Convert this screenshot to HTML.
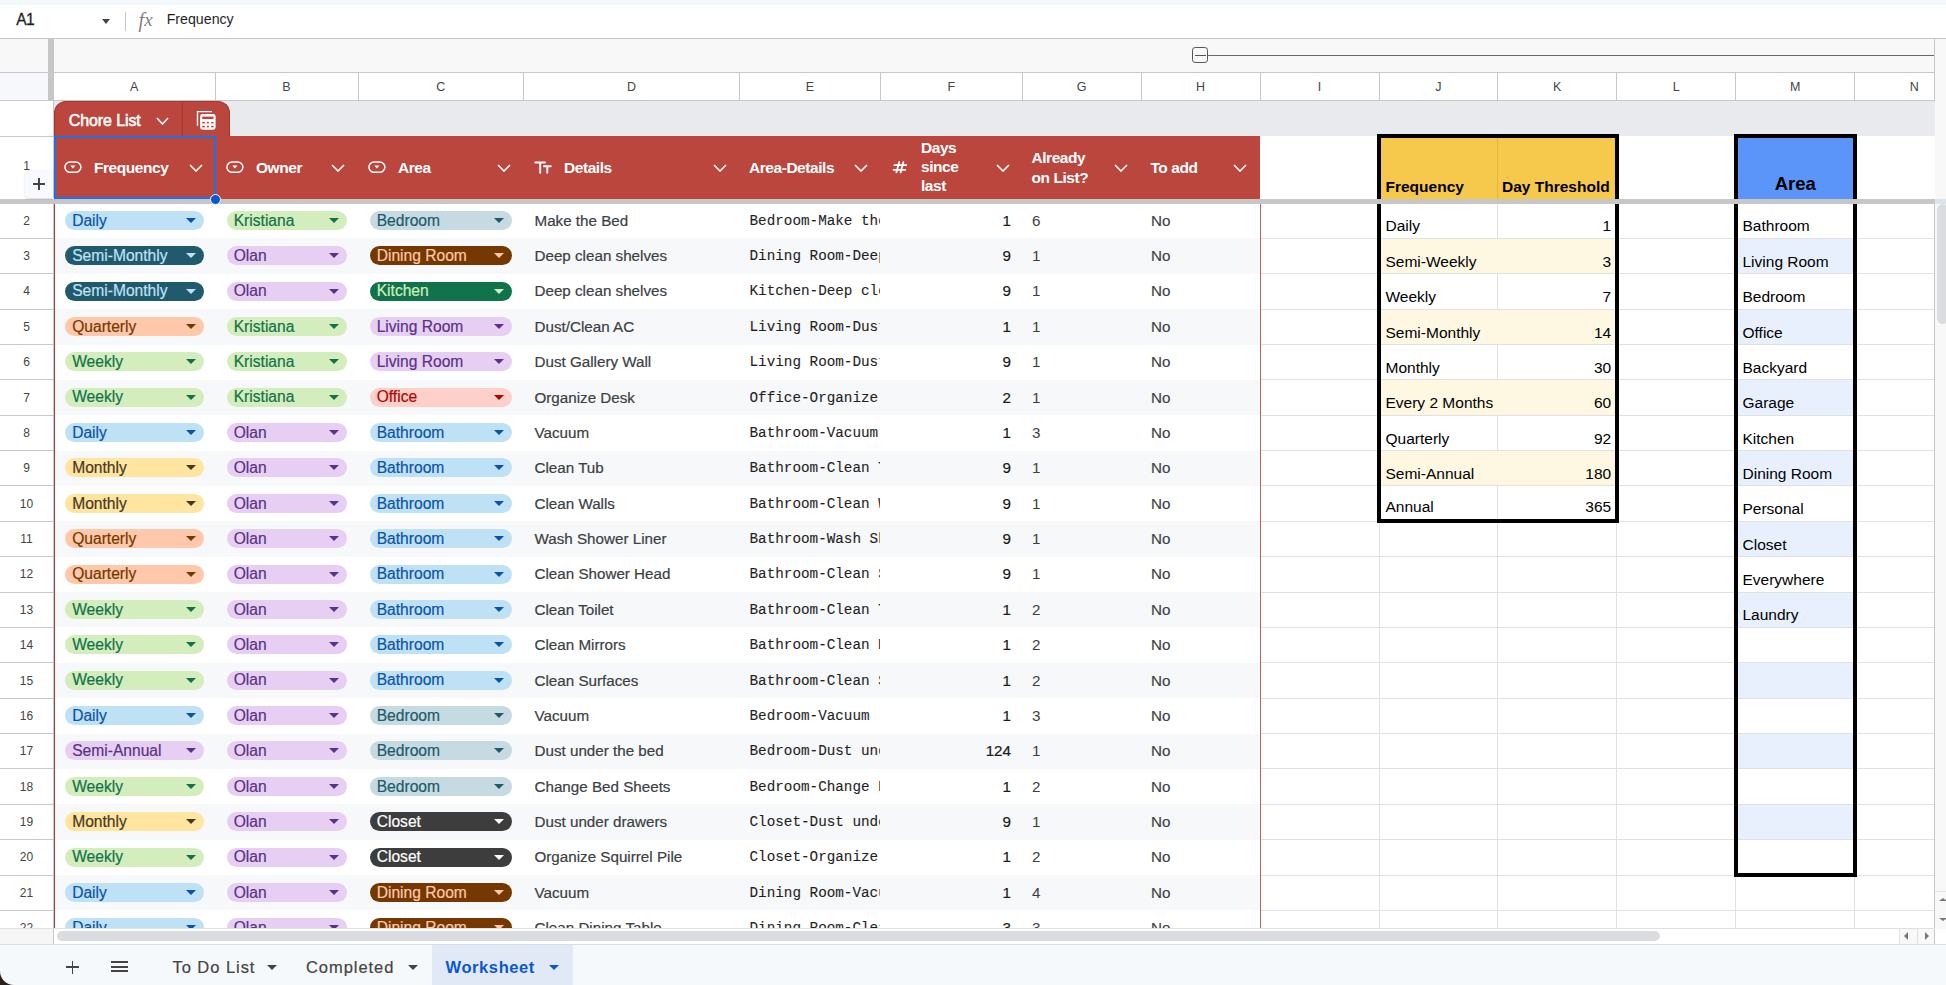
<!DOCTYPE html><html><head><meta charset="utf-8"><style>
html,body{margin:0;padding:0;width:1946px;height:985px;overflow:hidden;background:#fff;font-family:"Liberation Sans", sans-serif;}
#r{position:relative;width:1946px;height:985px;overflow:hidden;}
.chip{position:absolute;height:19px;border-radius:10px;font-size:15.6px;line-height:19px;}
.chip span{position:absolute;left:7.2px;top:-0.3px;-webkit-text-stroke:0.2px currentColor;}
.chip i{position:absolute;right:8px;top:7px;width:0;height:0;border-left:5px solid transparent;border-right:5px solid transparent;border-top:5px solid currentColor;}
.t{position:absolute;white-space:nowrap;}
</style></head><body><div id="r">
<div style="position:absolute;left:0.00px;top:0.00px;width:1946.00px;height:4.50px;background:#f4f8fc;"></div>
<div style="position:absolute;left:0.00px;top:4.50px;width:1946.00px;height:33.50px;background:#fff;"></div>
<div style="position:absolute;left:0.00px;top:38.00px;width:1946.00px;height:1.00px;background:#c7c7c7;"></div>
<div style="position:absolute;left:16.30px;top:9.80px;white-space:nowrap;font-size:15.6px;line-height:20px;color:#1f1f1f;letter-spacing:-0.7px;-webkit-text-stroke:0.3px #1f1f1f;">A1</div>
<div style="position:absolute;left:101.5px;top:18.5px;width:0;height:0;border-left:4.5px solid transparent;border-right:4.5px solid transparent;border-top:5px solid #444;"></div>
<div style="position:absolute;left:125.00px;top:12.00px;width:1.00px;height:19.00px;background:#c7c7c7;"></div>
<div style="position:absolute;left:138.5px;top:9.5px;font-family:'Liberation Serif',serif;font-style:italic;font-size:20px;line-height:20px;color:#808080;">f</div>
<div style="position:absolute;left:144.3px;top:9.5px;font-family:'Liberation Serif',serif;font-style:italic;font-size:19px;line-height:20px;color:#808080;">x</div>
<div style="position:absolute;left:166.70px;top:9.20px;white-space:nowrap;font-size:14.2px;line-height:20px;color:#1f1f1f;">Frequency</div>
<div style="position:absolute;left:0.00px;top:39.00px;width:1946.00px;height:33.00px;background:#f8f8f8;"></div>
<div style="position:absolute;left:0.00px;top:72.00px;width:1946.00px;height:1.00px;background:#c7c7c7;"></div>
<div style="position:absolute;left:1192px;top:47.2px;width:13.8px;height:13.8px;border:1.5px solid #555;border-radius:3.2px;background:#f8f8f8;"></div>
<div style="position:absolute;left:1195.20px;top:54.70px;width:10.40px;height:1.50px;background:#555;"></div>
<div style="position:absolute;left:1207.50px;top:54.80px;width:727.00px;height:1.30px;background:#6a6a6a;"></div>
<div style="position:absolute;left:53.50px;top:73.00px;width:1881.00px;height:27.00px;background:#fff;"></div>
<div style="position:absolute;left:0.00px;top:73.00px;width:48.00px;height:27.00px;background:#f6f8fb;"></div>
<div style="position:absolute;left:0.00px;top:100.00px;width:1946.00px;height:1.00px;background:#c7c7c7;"></div>
<div style="position:absolute;left:48.00px;top:39.00px;width:5.50px;height:61.00px;background:#c7c7c7;"></div>
<div style="position:absolute;left:53.50px;top:77.70px;width:161.50px;white-space:nowrap;font-size:12.5px;line-height:18px;color:#444;text-align:center;">A</div>
<div style="position:absolute;left:214.50px;top:73.00px;width:1.00px;height:27.00px;background:#c7c7c7;"></div>
<div style="position:absolute;left:215.00px;top:77.70px;width:143.00px;white-space:nowrap;font-size:12.5px;line-height:18px;color:#444;text-align:center;">B</div>
<div style="position:absolute;left:357.50px;top:73.00px;width:1.00px;height:27.00px;background:#c7c7c7;"></div>
<div style="position:absolute;left:358.00px;top:77.70px;width:165.50px;white-space:nowrap;font-size:12.5px;line-height:18px;color:#444;text-align:center;">C</div>
<div style="position:absolute;left:523.00px;top:73.00px;width:1.00px;height:27.00px;background:#c7c7c7;"></div>
<div style="position:absolute;left:523.50px;top:77.70px;width:215.80px;white-space:nowrap;font-size:12.5px;line-height:18px;color:#444;text-align:center;">D</div>
<div style="position:absolute;left:738.80px;top:73.00px;width:1.00px;height:27.00px;background:#c7c7c7;"></div>
<div style="position:absolute;left:739.30px;top:77.70px;width:141.20px;white-space:nowrap;font-size:12.5px;line-height:18px;color:#444;text-align:center;">E</div>
<div style="position:absolute;left:880.00px;top:73.00px;width:1.00px;height:27.00px;background:#c7c7c7;"></div>
<div style="position:absolute;left:880.50px;top:77.70px;width:141.50px;white-space:nowrap;font-size:12.5px;line-height:18px;color:#444;text-align:center;">F</div>
<div style="position:absolute;left:1021.50px;top:73.00px;width:1.00px;height:27.00px;background:#c7c7c7;"></div>
<div style="position:absolute;left:1022.00px;top:77.70px;width:119.00px;white-space:nowrap;font-size:12.5px;line-height:18px;color:#444;text-align:center;">G</div>
<div style="position:absolute;left:1140.50px;top:73.00px;width:1.00px;height:27.00px;background:#c7c7c7;"></div>
<div style="position:absolute;left:1141.00px;top:77.70px;width:119.00px;white-space:nowrap;font-size:12.5px;line-height:18px;color:#444;text-align:center;">H</div>
<div style="position:absolute;left:1259.50px;top:73.00px;width:1.00px;height:27.00px;background:#c7c7c7;"></div>
<div style="position:absolute;left:1260.00px;top:77.70px;width:119.00px;white-space:nowrap;font-size:12.5px;line-height:18px;color:#444;text-align:center;">I</div>
<div style="position:absolute;left:1378.50px;top:73.00px;width:1.00px;height:27.00px;background:#c7c7c7;"></div>
<div style="position:absolute;left:1379.00px;top:77.70px;width:118.70px;white-space:nowrap;font-size:12.5px;line-height:18px;color:#444;text-align:center;">J</div>
<div style="position:absolute;left:1497.20px;top:73.00px;width:1.00px;height:27.00px;background:#c7c7c7;"></div>
<div style="position:absolute;left:1497.70px;top:77.70px;width:119.10px;white-space:nowrap;font-size:12.5px;line-height:18px;color:#444;text-align:center;">K</div>
<div style="position:absolute;left:1616.30px;top:73.00px;width:1.00px;height:27.00px;background:#c7c7c7;"></div>
<div style="position:absolute;left:1616.80px;top:77.70px;width:119.00px;white-space:nowrap;font-size:12.5px;line-height:18px;color:#444;text-align:center;">L</div>
<div style="position:absolute;left:1735.30px;top:73.00px;width:1.00px;height:27.00px;background:#c7c7c7;"></div>
<div style="position:absolute;left:1735.80px;top:77.70px;width:119.00px;white-space:nowrap;font-size:12.5px;line-height:18px;color:#444;text-align:center;">M</div>
<div style="position:absolute;left:1854.30px;top:73.00px;width:1.00px;height:27.00px;background:#c7c7c7;"></div>
<div style="position:absolute;left:1854.80px;top:77.70px;width:119.00px;white-space:nowrap;font-size:12.5px;line-height:18px;color:#444;text-align:center;">N</div>
<div style="position:absolute;left:1934.00px;top:39.00px;width:1.00px;height:61.00px;background:#c7c7c7;"></div>
<div style="position:absolute;left:1935.00px;top:39.00px;width:11.00px;height:890.00px;background:#f8f8f8;"></div>
<div style="position:absolute;left:53.50px;top:101.00px;width:1881.00px;height:35.00px;background:#e8eaed;"></div>
<div style="position:absolute;left:0.00px;top:101.00px;width:53.50px;height:35.00px;background:#fff;"></div>
<div style="position:absolute;left:0.00px;top:135.50px;width:53.50px;height:1.00px;background:#c7c7c7;"></div>
<div style="position:absolute;left:53.00px;top:101.00px;width:1.00px;height:35.00px;background:#c7c7c7;"></div>
<div style="position:absolute;left:0.00px;top:136.50px;width:53.00px;height:62.00px;background:#fff;"></div>
<div style="position:absolute;left:53.00px;top:136.00px;width:1.00px;height:62.00px;background:#c7c7c7;"></div>
<div style="position:absolute;left:1260.00px;top:136.50px;width:675.00px;height:62.00px;background:#fff;"></div>
<div style="position:absolute;left:54.00px;top:136.00px;width:1206.00px;height:62.50px;background:#ba463d;"></div>
<div style="position:absolute;left:54px;top:101.3px;width:173.5px;height:33.5px;background:#ba463d;border:1px solid #a5372e;border-bottom:none;border-radius:12px 12px 0 0;"></div>
<div style="position:absolute;left:181.50px;top:102.00px;width:1.20px;height:34.00px;background:#9c3a31;"></div>
<div style="position:absolute;left:68.80px;top:110.60px;white-space:nowrap;font-size:16px;line-height:20px;color:#fff;letter-spacing:-0.1px;-webkit-text-stroke:0.55px #fff;">Chore List</div>
<svg style="position:absolute;left:156.10px;top:117.30px;" width="13" height="8" viewBox="-1 -1 13 8"><path d="M0 0 L5.5 6 L11 0" fill="none" stroke="#fff" stroke-width="1.6"/></svg>
<svg style="position:absolute;left:194px;top:108px;" width="24" height="24" viewBox="0 0 24 24"><path d="M3.5 17.8 V3.6 H18" fill="none" stroke="#fff" stroke-width="1.4"/><rect x="6.1" y="6" width="15.5" height="15.7" rx="2.4" fill="#fff"/><rect x="8.2" y="8.6" width="11.3" height="2.5" fill="#ba463d"/><rect x="8.2" y="13.9" width="2.6" height="1.5" fill="#ba463d"/><rect x="12.9" y="13.9" width="2" height="1.5" fill="#ba463d"/><rect x="17.2" y="13.9" width="2.3" height="1.5" fill="#ba463d"/><rect x="8.2" y="17.8" width="2.6" height="1.6" fill="#ba463d"/><rect x="12.9" y="17.8" width="2" height="1.6" fill="#ba463d"/><rect x="17.2" y="17.8" width="2.3" height="1.6" fill="#ba463d"/></svg>
<svg style="position:absolute;left:64.00px;top:161.30px;" width="18" height="12" viewBox="0 0 18 12"><rect x="0.9" y="0.9" width="16" height="10.4" rx="5.2" fill="none" stroke="#fff" stroke-width="1.5"/><path d="M6.3 4.6 H11.5 L8.9 7.4 Z" fill="#fff"/></svg>
<div style="position:absolute;left:94.00px;top:157.50px;white-space:nowrap;font-size:15.5px;line-height:20px;color:#fff;font-weight:bold;letter-spacing:-0.45px;">Frequency</div>
<svg style="position:absolute;left:188.50px;top:164.30px;" width="14" height="8" viewBox="-1 -1 14 8"><path d="M0 0 L6.0 6 L12 0" fill="none" stroke="#fff" stroke-width="1.6"/></svg>
<svg style="position:absolute;left:225.50px;top:161.30px;" width="18" height="12" viewBox="0 0 18 12"><rect x="0.9" y="0.9" width="16" height="10.4" rx="5.2" fill="none" stroke="#fff" stroke-width="1.5"/><path d="M6.3 4.6 H11.5 L8.9 7.4 Z" fill="#fff"/></svg>
<div style="position:absolute;left:256.00px;top:157.50px;white-space:nowrap;font-size:15.5px;line-height:20px;color:#fff;font-weight:bold;letter-spacing:-0.45px;">Owner</div>
<svg style="position:absolute;left:331.30px;top:164.30px;" width="14" height="8" viewBox="-1 -1 14 8"><path d="M0 0 L6.0 6 L12 0" fill="none" stroke="#fff" stroke-width="1.6"/></svg>
<svg style="position:absolute;left:368.20px;top:161.30px;" width="18" height="12" viewBox="0 0 18 12"><rect x="0.9" y="0.9" width="16" height="10.4" rx="5.2" fill="none" stroke="#fff" stroke-width="1.5"/><path d="M6.3 4.6 H11.5 L8.9 7.4 Z" fill="#fff"/></svg>
<div style="position:absolute;left:398.00px;top:157.50px;white-space:nowrap;font-size:15.5px;line-height:20px;color:#fff;font-weight:bold;letter-spacing:-0.45px;">Area</div>
<svg style="position:absolute;left:497.40px;top:164.30px;" width="14" height="8" viewBox="-1 -1 14 8"><path d="M0 0 L6.0 6 L12 0" fill="none" stroke="#fff" stroke-width="1.6"/></svg>
<svg style="position:absolute;left:530px;top:155px;" width="30" height="25" viewBox="530 155 30 25"><path d="M535.3 162.5 H545 M540.2 162.5 V172.8 M544 166.3 H550.8 M547.3 166.3 V172.8" fill="none" stroke="#fff" stroke-width="1.9" stroke-linecap="round"/></svg>
<div style="position:absolute;left:564.00px;top:157.50px;white-space:nowrap;font-size:15.5px;line-height:20px;color:#fff;font-weight:bold;letter-spacing:-0.45px;">Details</div>
<svg style="position:absolute;left:712.80px;top:164.30px;" width="14" height="8" viewBox="-1 -1 14 8"><path d="M0 0 L6.0 6 L12 0" fill="none" stroke="#fff" stroke-width="1.6"/></svg>
<div style="position:absolute;left:749.00px;top:157.50px;white-space:nowrap;font-size:15.5px;line-height:20px;color:#fff;font-weight:bold;letter-spacing:-0.45px;">Area-Details</div>
<svg style="position:absolute;left:854.00px;top:164.30px;" width="14" height="8" viewBox="-1 -1 14 8"><path d="M0 0 L6.0 6 L12 0" fill="none" stroke="#fff" stroke-width="1.6"/></svg>
<svg style="position:absolute;left:885px;top:155px;" width="30" height="25" viewBox="885 155 30 25"><path d="M894.4 165.2 H906.2 M893.6 169.8 H905.3 M899.2 162 L896.4 172.4 M903.4 162 L900.6 172.4" fill="none" stroke="#fff" stroke-width="1.8" stroke-linecap="round"/></svg>
<div class="t" style="left:921px;top:139.3px;font-size:15.5px;line-height:20px;color:#fff;font-weight:bold;letter-spacing:-0.45px;line-height:18.7px;">Days<br>since<br>last</div>
<svg style="position:absolute;left:995.50px;top:164.30px;" width="14" height="8" viewBox="-1 -1 14 8"><path d="M0 0 L6.0 6 L12 0" fill="none" stroke="#fff" stroke-width="1.6"/></svg>
<div class="t" style="left:1031.5px;top:148.3px;font-size:15.5px;line-height:20px;color:#fff;font-weight:bold;letter-spacing:-0.45px;line-height:19.6px;">Already<br>on List?</div>
<svg style="position:absolute;left:1114.30px;top:164.30px;" width="14" height="8" viewBox="-1 -1 14 8"><path d="M0 0 L6.0 6 L12 0" fill="none" stroke="#fff" stroke-width="1.6"/></svg>
<div style="position:absolute;left:1150.50px;top:157.50px;white-space:nowrap;font-size:15.5px;line-height:20px;color:#fff;font-weight:bold;letter-spacing:-0.45px;">To add</div>
<svg style="position:absolute;left:1233.30px;top:164.30px;" width="14" height="8" viewBox="-1 -1 14 8"><path d="M0 0 L6.0 6 L12 0" fill="none" stroke="#fff" stroke-width="1.6"/></svg>
<div style="position:absolute;left:1377.00px;top:134.00px;width:241.50px;height:64.50px;background:#000;"></div>
<div style="position:absolute;left:1380.50px;top:137.50px;width:234.50px;height:61.00px;background:#f6c94c;"></div>
<div style="position:absolute;left:1497.20px;top:137.50px;width:0.80px;height:61.00px;background:#e2b540;"></div>
<div style="position:absolute;left:1385.50px;top:177.50px;white-space:nowrap;font-size:15.5px;line-height:18px;color:#000;font-weight:bold;">Frequency</div>
<div style="position:absolute;left:1502.00px;top:177.50px;white-space:nowrap;font-size:15.5px;line-height:18px;color:#000;font-weight:bold;">Day Threshold</div>
<div style="position:absolute;left:1734.00px;top:134.00px;width:122.50px;height:64.50px;background:#000;"></div>
<div style="position:absolute;left:1737.50px;top:137.50px;width:115.50px;height:61.00px;background:#5b95f9;"></div>
<div style="position:absolute;left:1737.50px;top:174.00px;width:115.50px;white-space:nowrap;font-size:18.5px;line-height:20px;color:#000;font-weight:bold;text-align:center;">Area</div>
<div style="position:absolute;left:0.00px;top:198.50px;width:1935.00px;height:5.00px;background:#c7c7c7;"></div>
<div style="position:absolute;left:1935.00px;top:198.50px;width:11.00px;height:5.00px;background:#dde3ea;"></div>
<div style="position:absolute;left:0;top:203.5px;width:1935px;height:725.00px;overflow:hidden;">
<div style="position:absolute;left:0.00px;top:0.50px;width:53.00px;height:33.90px;background:#fff;"></div>
<div style="position:absolute;left:0.00px;top:34.40px;width:53.00px;height:1.00px;background:#c7c7c7;"></div>
<div class="t" style="left:0;top:9.20px;width:53px;text-align:center;font-size:12px;line-height:16px;color:#444;">2</div>
<div style="position:absolute;left:55.00px;top:0.00px;width:1204.50px;height:35.40px;background:#fff;"></div>
<div class="chip" style="left:65.00px;top:7.40px;width:138.70px;background:#bfe1f6;color:#0a53a8;"><span>Daily</span><i></i></div>
<div class="chip" style="left:226.50px;top:7.40px;width:120.20px;background:#d4edbc;color:#11734b;"><span>Kristiana</span><i></i></div>
<div class="chip" style="left:369.50px;top:7.40px;width:142.70px;background:#c6dbe1;color:#215a6c;"><span>Bedroom</span><i></i></div>
<div class="t" style="left:534.5px;top:7.20px;font-size:15.2px;line-height:20px;color:#3c4043;-webkit-text-stroke:0.2px #3c4043;">Make the Bed</div>
<div class="t" style="left:749.5px;top:7.20px;width:130.5px;overflow:hidden;font-family:'Liberation Mono', monospace;font-size:14.3px;line-height:20px;color:#1f1f1f;-webkit-text-stroke:0.1px #1f1f1f;">Bedroom-Make the Bed</div>
<div class="t" style="left:880.5px;top:7.20px;width:130.5px;text-align:right;font-size:15.2px;line-height:20px;color:#1a1a1a;-webkit-text-stroke:0.2px #1a1a1a;">1</div>
<div class="t" style="left:1032px;top:7.20px;font-size:15.2px;line-height:20px;color:#3c4043;">6</div>
<div class="t" style="left:1151px;top:7.20px;font-size:15.2px;line-height:20px;color:#3c4043;-webkit-text-stroke:0.15px #3c4043;">No</div>
<div style="position:absolute;left:1260.00px;top:34.40px;width:675.00px;height:1.00px;background:#e1e1e1;"></div>
<div style="position:absolute;left:0.00px;top:35.40px;width:53.00px;height:34.37px;background:#fff;"></div>
<div style="position:absolute;left:0.00px;top:69.77px;width:53.00px;height:1.00px;background:#c7c7c7;"></div>
<div class="t" style="left:0;top:44.57px;width:53px;text-align:center;font-size:12px;line-height:16px;color:#444;">3</div>
<div style="position:absolute;left:55.00px;top:34.90px;width:1204.50px;height:35.87px;background:#f6f8f9;"></div>
<div class="chip" style="left:65.00px;top:42.77px;width:138.70px;background:#215a6c;color:#bfe1f6;"><span>Semi-Monthly</span><i></i></div>
<div class="chip" style="left:226.50px;top:42.77px;width:120.20px;background:#e6cff2;color:#5a3286;"><span>Olan</span><i></i></div>
<div class="chip" style="left:369.50px;top:42.77px;width:142.70px;background:#753800;color:#ffc8aa;"><span>Dining Room</span><i></i></div>
<div class="t" style="left:534.5px;top:42.57px;font-size:15.2px;line-height:20px;color:#3c4043;-webkit-text-stroke:0.2px #3c4043;">Deep clean shelves</div>
<div class="t" style="left:749.5px;top:42.57px;width:130.5px;overflow:hidden;font-family:'Liberation Mono', monospace;font-size:14.3px;line-height:20px;color:#1f1f1f;-webkit-text-stroke:0.1px #1f1f1f;">Dining Room-Deep clean shelves</div>
<div class="t" style="left:880.5px;top:42.57px;width:130.5px;text-align:right;font-size:15.2px;line-height:20px;color:#1a1a1a;-webkit-text-stroke:0.2px #1a1a1a;">9</div>
<div class="t" style="left:1032px;top:42.57px;font-size:15.2px;line-height:20px;color:#3c4043;">1</div>
<div class="t" style="left:1151px;top:42.57px;font-size:15.2px;line-height:20px;color:#3c4043;-webkit-text-stroke:0.15px #3c4043;">No</div>
<div style="position:absolute;left:1260.00px;top:69.77px;width:675.00px;height:1.00px;background:#e1e1e1;"></div>
<div style="position:absolute;left:0.00px;top:70.77px;width:53.00px;height:34.37px;background:#fff;"></div>
<div style="position:absolute;left:0.00px;top:105.14px;width:53.00px;height:1.00px;background:#c7c7c7;"></div>
<div class="t" style="left:0;top:79.94px;width:53px;text-align:center;font-size:12px;line-height:16px;color:#444;">4</div>
<div style="position:absolute;left:55.00px;top:70.27px;width:1204.50px;height:35.87px;background:#fff;"></div>
<div class="chip" style="left:65.00px;top:78.14px;width:138.70px;background:#215a6c;color:#bfe1f6;"><span>Semi-Monthly</span><i></i></div>
<div class="chip" style="left:226.50px;top:78.14px;width:120.20px;background:#e6cff2;color:#5a3286;"><span>Olan</span><i></i></div>
<div class="chip" style="left:369.50px;top:78.14px;width:142.70px;background:#11734b;color:#d4edbc;"><span>Kitchen</span><i></i></div>
<div class="t" style="left:534.5px;top:77.94px;font-size:15.2px;line-height:20px;color:#3c4043;-webkit-text-stroke:0.2px #3c4043;">Deep clean shelves</div>
<div class="t" style="left:749.5px;top:77.94px;width:130.5px;overflow:hidden;font-family:'Liberation Mono', monospace;font-size:14.3px;line-height:20px;color:#1f1f1f;-webkit-text-stroke:0.1px #1f1f1f;">Kitchen-Deep clean shelves</div>
<div class="t" style="left:880.5px;top:77.94px;width:130.5px;text-align:right;font-size:15.2px;line-height:20px;color:#1a1a1a;-webkit-text-stroke:0.2px #1a1a1a;">9</div>
<div class="t" style="left:1032px;top:77.94px;font-size:15.2px;line-height:20px;color:#3c4043;">1</div>
<div class="t" style="left:1151px;top:77.94px;font-size:15.2px;line-height:20px;color:#3c4043;-webkit-text-stroke:0.15px #3c4043;">No</div>
<div style="position:absolute;left:1260.00px;top:105.14px;width:675.00px;height:1.00px;background:#e1e1e1;"></div>
<div style="position:absolute;left:0.00px;top:106.14px;width:53.00px;height:34.37px;background:#fff;"></div>
<div style="position:absolute;left:0.00px;top:140.51px;width:53.00px;height:1.00px;background:#c7c7c7;"></div>
<div class="t" style="left:0;top:115.31px;width:53px;text-align:center;font-size:12px;line-height:16px;color:#444;">5</div>
<div style="position:absolute;left:55.00px;top:105.64px;width:1204.50px;height:35.87px;background:#f6f8f9;"></div>
<div class="chip" style="left:65.00px;top:113.51px;width:138.70px;background:#ffc8aa;color:#753800;"><span>Quarterly</span><i></i></div>
<div class="chip" style="left:226.50px;top:113.51px;width:120.20px;background:#d4edbc;color:#11734b;"><span>Kristiana</span><i></i></div>
<div class="chip" style="left:369.50px;top:113.51px;width:142.70px;background:#e6cff2;color:#5a3286;"><span>Living Room</span><i></i></div>
<div class="t" style="left:534.5px;top:113.31px;font-size:15.2px;line-height:20px;color:#3c4043;-webkit-text-stroke:0.2px #3c4043;">Dust/Clean AC</div>
<div class="t" style="left:749.5px;top:113.31px;width:130.5px;overflow:hidden;font-family:'Liberation Mono', monospace;font-size:14.3px;line-height:20px;color:#1f1f1f;-webkit-text-stroke:0.1px #1f1f1f;">Living Room-Dust/Clean AC</div>
<div class="t" style="left:880.5px;top:113.31px;width:130.5px;text-align:right;font-size:15.2px;line-height:20px;color:#1a1a1a;-webkit-text-stroke:0.2px #1a1a1a;">1</div>
<div class="t" style="left:1032px;top:113.31px;font-size:15.2px;line-height:20px;color:#3c4043;">1</div>
<div class="t" style="left:1151px;top:113.31px;font-size:15.2px;line-height:20px;color:#3c4043;-webkit-text-stroke:0.15px #3c4043;">No</div>
<div style="position:absolute;left:1260.00px;top:140.51px;width:675.00px;height:1.00px;background:#e1e1e1;"></div>
<div style="position:absolute;left:0.00px;top:141.51px;width:53.00px;height:34.37px;background:#fff;"></div>
<div style="position:absolute;left:0.00px;top:175.88px;width:53.00px;height:1.00px;background:#c7c7c7;"></div>
<div class="t" style="left:0;top:150.68px;width:53px;text-align:center;font-size:12px;line-height:16px;color:#444;">6</div>
<div style="position:absolute;left:55.00px;top:141.01px;width:1204.50px;height:35.87px;background:#fff;"></div>
<div class="chip" style="left:65.00px;top:148.88px;width:138.70px;background:#d4edbc;color:#11734b;"><span>Weekly</span><i></i></div>
<div class="chip" style="left:226.50px;top:148.88px;width:120.20px;background:#d4edbc;color:#11734b;"><span>Kristiana</span><i></i></div>
<div class="chip" style="left:369.50px;top:148.88px;width:142.70px;background:#e6cff2;color:#5a3286;"><span>Living Room</span><i></i></div>
<div class="t" style="left:534.5px;top:148.68px;font-size:15.2px;line-height:20px;color:#3c4043;-webkit-text-stroke:0.2px #3c4043;">Dust Gallery Wall</div>
<div class="t" style="left:749.5px;top:148.68px;width:130.5px;overflow:hidden;font-family:'Liberation Mono', monospace;font-size:14.3px;line-height:20px;color:#1f1f1f;-webkit-text-stroke:0.1px #1f1f1f;">Living Room-Dust Gallery Wall</div>
<div class="t" style="left:880.5px;top:148.68px;width:130.5px;text-align:right;font-size:15.2px;line-height:20px;color:#1a1a1a;-webkit-text-stroke:0.2px #1a1a1a;">9</div>
<div class="t" style="left:1032px;top:148.68px;font-size:15.2px;line-height:20px;color:#3c4043;">1</div>
<div class="t" style="left:1151px;top:148.68px;font-size:15.2px;line-height:20px;color:#3c4043;-webkit-text-stroke:0.15px #3c4043;">No</div>
<div style="position:absolute;left:1260.00px;top:175.88px;width:675.00px;height:1.00px;background:#e1e1e1;"></div>
<div style="position:absolute;left:0.00px;top:176.88px;width:53.00px;height:34.37px;background:#fff;"></div>
<div style="position:absolute;left:0.00px;top:211.25px;width:53.00px;height:1.00px;background:#c7c7c7;"></div>
<div class="t" style="left:0;top:186.05px;width:53px;text-align:center;font-size:12px;line-height:16px;color:#444;">7</div>
<div style="position:absolute;left:55.00px;top:176.38px;width:1204.50px;height:35.87px;background:#f6f8f9;"></div>
<div class="chip" style="left:65.00px;top:184.25px;width:138.70px;background:#d4edbc;color:#11734b;"><span>Weekly</span><i></i></div>
<div class="chip" style="left:226.50px;top:184.25px;width:120.20px;background:#d4edbc;color:#11734b;"><span>Kristiana</span><i></i></div>
<div class="chip" style="left:369.50px;top:184.25px;width:142.70px;background:#ffcfc9;color:#b10202;"><span>Office</span><i></i></div>
<div class="t" style="left:534.5px;top:184.05px;font-size:15.2px;line-height:20px;color:#3c4043;-webkit-text-stroke:0.2px #3c4043;">Organize Desk</div>
<div class="t" style="left:749.5px;top:184.05px;width:130.5px;overflow:hidden;font-family:'Liberation Mono', monospace;font-size:14.3px;line-height:20px;color:#1f1f1f;-webkit-text-stroke:0.1px #1f1f1f;">Office-Organize Desk</div>
<div class="t" style="left:880.5px;top:184.05px;width:130.5px;text-align:right;font-size:15.2px;line-height:20px;color:#1a1a1a;-webkit-text-stroke:0.2px #1a1a1a;">2</div>
<div class="t" style="left:1032px;top:184.05px;font-size:15.2px;line-height:20px;color:#3c4043;">1</div>
<div class="t" style="left:1151px;top:184.05px;font-size:15.2px;line-height:20px;color:#3c4043;-webkit-text-stroke:0.15px #3c4043;">No</div>
<div style="position:absolute;left:1260.00px;top:211.25px;width:675.00px;height:1.00px;background:#e1e1e1;"></div>
<div style="position:absolute;left:0.00px;top:212.25px;width:53.00px;height:34.37px;background:#fff;"></div>
<div style="position:absolute;left:0.00px;top:246.62px;width:53.00px;height:1.00px;background:#c7c7c7;"></div>
<div class="t" style="left:0;top:221.42px;width:53px;text-align:center;font-size:12px;line-height:16px;color:#444;">8</div>
<div style="position:absolute;left:55.00px;top:211.75px;width:1204.50px;height:35.87px;background:#fff;"></div>
<div class="chip" style="left:65.00px;top:219.62px;width:138.70px;background:#bfe1f6;color:#0a53a8;"><span>Daily</span><i></i></div>
<div class="chip" style="left:226.50px;top:219.62px;width:120.20px;background:#e6cff2;color:#5a3286;"><span>Olan</span><i></i></div>
<div class="chip" style="left:369.50px;top:219.62px;width:142.70px;background:#bfe1f6;color:#0a53a8;"><span>Bathroom</span><i></i></div>
<div class="t" style="left:534.5px;top:219.42px;font-size:15.2px;line-height:20px;color:#3c4043;-webkit-text-stroke:0.2px #3c4043;">Vacuum</div>
<div class="t" style="left:749.5px;top:219.42px;width:130.5px;overflow:hidden;font-family:'Liberation Mono', monospace;font-size:14.3px;line-height:20px;color:#1f1f1f;-webkit-text-stroke:0.1px #1f1f1f;">Bathroom-Vacuum</div>
<div class="t" style="left:880.5px;top:219.42px;width:130.5px;text-align:right;font-size:15.2px;line-height:20px;color:#1a1a1a;-webkit-text-stroke:0.2px #1a1a1a;">1</div>
<div class="t" style="left:1032px;top:219.42px;font-size:15.2px;line-height:20px;color:#3c4043;">3</div>
<div class="t" style="left:1151px;top:219.42px;font-size:15.2px;line-height:20px;color:#3c4043;-webkit-text-stroke:0.15px #3c4043;">No</div>
<div style="position:absolute;left:1260.00px;top:246.62px;width:675.00px;height:1.00px;background:#e1e1e1;"></div>
<div style="position:absolute;left:0.00px;top:247.62px;width:53.00px;height:34.37px;background:#fff;"></div>
<div style="position:absolute;left:0.00px;top:281.99px;width:53.00px;height:1.00px;background:#c7c7c7;"></div>
<div class="t" style="left:0;top:256.79px;width:53px;text-align:center;font-size:12px;line-height:16px;color:#444;">9</div>
<div style="position:absolute;left:55.00px;top:247.12px;width:1204.50px;height:35.87px;background:#f6f8f9;"></div>
<div class="chip" style="left:65.00px;top:254.99px;width:138.70px;background:#ffe5a0;color:#473821;"><span>Monthly</span><i></i></div>
<div class="chip" style="left:226.50px;top:254.99px;width:120.20px;background:#e6cff2;color:#5a3286;"><span>Olan</span><i></i></div>
<div class="chip" style="left:369.50px;top:254.99px;width:142.70px;background:#bfe1f6;color:#0a53a8;"><span>Bathroom</span><i></i></div>
<div class="t" style="left:534.5px;top:254.79px;font-size:15.2px;line-height:20px;color:#3c4043;-webkit-text-stroke:0.2px #3c4043;">Clean Tub</div>
<div class="t" style="left:749.5px;top:254.79px;width:130.5px;overflow:hidden;font-family:'Liberation Mono', monospace;font-size:14.3px;line-height:20px;color:#1f1f1f;-webkit-text-stroke:0.1px #1f1f1f;">Bathroom-Clean Tub</div>
<div class="t" style="left:880.5px;top:254.79px;width:130.5px;text-align:right;font-size:15.2px;line-height:20px;color:#1a1a1a;-webkit-text-stroke:0.2px #1a1a1a;">9</div>
<div class="t" style="left:1032px;top:254.79px;font-size:15.2px;line-height:20px;color:#3c4043;">1</div>
<div class="t" style="left:1151px;top:254.79px;font-size:15.2px;line-height:20px;color:#3c4043;-webkit-text-stroke:0.15px #3c4043;">No</div>
<div style="position:absolute;left:1260.00px;top:281.99px;width:675.00px;height:1.00px;background:#e1e1e1;"></div>
<div style="position:absolute;left:0.00px;top:282.99px;width:53.00px;height:34.37px;background:#fff;"></div>
<div style="position:absolute;left:0.00px;top:317.36px;width:53.00px;height:1.00px;background:#c7c7c7;"></div>
<div class="t" style="left:0;top:292.16px;width:53px;text-align:center;font-size:12px;line-height:16px;color:#444;">10</div>
<div style="position:absolute;left:55.00px;top:282.49px;width:1204.50px;height:35.87px;background:#fff;"></div>
<div class="chip" style="left:65.00px;top:290.36px;width:138.70px;background:#ffe5a0;color:#473821;"><span>Monthly</span><i></i></div>
<div class="chip" style="left:226.50px;top:290.36px;width:120.20px;background:#e6cff2;color:#5a3286;"><span>Olan</span><i></i></div>
<div class="chip" style="left:369.50px;top:290.36px;width:142.70px;background:#bfe1f6;color:#0a53a8;"><span>Bathroom</span><i></i></div>
<div class="t" style="left:534.5px;top:290.16px;font-size:15.2px;line-height:20px;color:#3c4043;-webkit-text-stroke:0.2px #3c4043;">Clean Walls</div>
<div class="t" style="left:749.5px;top:290.16px;width:130.5px;overflow:hidden;font-family:'Liberation Mono', monospace;font-size:14.3px;line-height:20px;color:#1f1f1f;-webkit-text-stroke:0.1px #1f1f1f;">Bathroom-Clean Walls</div>
<div class="t" style="left:880.5px;top:290.16px;width:130.5px;text-align:right;font-size:15.2px;line-height:20px;color:#1a1a1a;-webkit-text-stroke:0.2px #1a1a1a;">9</div>
<div class="t" style="left:1032px;top:290.16px;font-size:15.2px;line-height:20px;color:#3c4043;">1</div>
<div class="t" style="left:1151px;top:290.16px;font-size:15.2px;line-height:20px;color:#3c4043;-webkit-text-stroke:0.15px #3c4043;">No</div>
<div style="position:absolute;left:1260.00px;top:317.36px;width:675.00px;height:1.00px;background:#e1e1e1;"></div>
<div style="position:absolute;left:0.00px;top:318.36px;width:53.00px;height:34.37px;background:#fff;"></div>
<div style="position:absolute;left:0.00px;top:352.73px;width:53.00px;height:1.00px;background:#c7c7c7;"></div>
<div class="t" style="left:0;top:327.53px;width:53px;text-align:center;font-size:12px;line-height:16px;color:#444;">11</div>
<div style="position:absolute;left:55.00px;top:317.86px;width:1204.50px;height:35.87px;background:#f6f8f9;"></div>
<div class="chip" style="left:65.00px;top:325.73px;width:138.70px;background:#ffc8aa;color:#753800;"><span>Quarterly</span><i></i></div>
<div class="chip" style="left:226.50px;top:325.73px;width:120.20px;background:#e6cff2;color:#5a3286;"><span>Olan</span><i></i></div>
<div class="chip" style="left:369.50px;top:325.73px;width:142.70px;background:#bfe1f6;color:#0a53a8;"><span>Bathroom</span><i></i></div>
<div class="t" style="left:534.5px;top:325.53px;font-size:15.2px;line-height:20px;color:#3c4043;-webkit-text-stroke:0.2px #3c4043;">Wash Shower Liner</div>
<div class="t" style="left:749.5px;top:325.53px;width:130.5px;overflow:hidden;font-family:'Liberation Mono', monospace;font-size:14.3px;line-height:20px;color:#1f1f1f;-webkit-text-stroke:0.1px #1f1f1f;">Bathroom-Wash Shower Liner</div>
<div class="t" style="left:880.5px;top:325.53px;width:130.5px;text-align:right;font-size:15.2px;line-height:20px;color:#1a1a1a;-webkit-text-stroke:0.2px #1a1a1a;">9</div>
<div class="t" style="left:1032px;top:325.53px;font-size:15.2px;line-height:20px;color:#3c4043;">1</div>
<div class="t" style="left:1151px;top:325.53px;font-size:15.2px;line-height:20px;color:#3c4043;-webkit-text-stroke:0.15px #3c4043;">No</div>
<div style="position:absolute;left:1260.00px;top:352.73px;width:675.00px;height:1.00px;background:#e1e1e1;"></div>
<div style="position:absolute;left:0.00px;top:353.73px;width:53.00px;height:34.37px;background:#fff;"></div>
<div style="position:absolute;left:0.00px;top:388.10px;width:53.00px;height:1.00px;background:#c7c7c7;"></div>
<div class="t" style="left:0;top:362.90px;width:53px;text-align:center;font-size:12px;line-height:16px;color:#444;">12</div>
<div style="position:absolute;left:55.00px;top:353.23px;width:1204.50px;height:35.87px;background:#fff;"></div>
<div class="chip" style="left:65.00px;top:361.10px;width:138.70px;background:#ffc8aa;color:#753800;"><span>Quarterly</span><i></i></div>
<div class="chip" style="left:226.50px;top:361.10px;width:120.20px;background:#e6cff2;color:#5a3286;"><span>Olan</span><i></i></div>
<div class="chip" style="left:369.50px;top:361.10px;width:142.70px;background:#bfe1f6;color:#0a53a8;"><span>Bathroom</span><i></i></div>
<div class="t" style="left:534.5px;top:360.90px;font-size:15.2px;line-height:20px;color:#3c4043;-webkit-text-stroke:0.2px #3c4043;">Clean Shower Head</div>
<div class="t" style="left:749.5px;top:360.90px;width:130.5px;overflow:hidden;font-family:'Liberation Mono', monospace;font-size:14.3px;line-height:20px;color:#1f1f1f;-webkit-text-stroke:0.1px #1f1f1f;">Bathroom-Clean Shower Head</div>
<div class="t" style="left:880.5px;top:360.90px;width:130.5px;text-align:right;font-size:15.2px;line-height:20px;color:#1a1a1a;-webkit-text-stroke:0.2px #1a1a1a;">9</div>
<div class="t" style="left:1032px;top:360.90px;font-size:15.2px;line-height:20px;color:#3c4043;">1</div>
<div class="t" style="left:1151px;top:360.90px;font-size:15.2px;line-height:20px;color:#3c4043;-webkit-text-stroke:0.15px #3c4043;">No</div>
<div style="position:absolute;left:1260.00px;top:388.10px;width:675.00px;height:1.00px;background:#e1e1e1;"></div>
<div style="position:absolute;left:0.00px;top:389.10px;width:53.00px;height:34.37px;background:#fff;"></div>
<div style="position:absolute;left:0.00px;top:423.47px;width:53.00px;height:1.00px;background:#c7c7c7;"></div>
<div class="t" style="left:0;top:398.27px;width:53px;text-align:center;font-size:12px;line-height:16px;color:#444;">13</div>
<div style="position:absolute;left:55.00px;top:388.60px;width:1204.50px;height:35.87px;background:#f6f8f9;"></div>
<div class="chip" style="left:65.00px;top:396.47px;width:138.70px;background:#d4edbc;color:#11734b;"><span>Weekly</span><i></i></div>
<div class="chip" style="left:226.50px;top:396.47px;width:120.20px;background:#e6cff2;color:#5a3286;"><span>Olan</span><i></i></div>
<div class="chip" style="left:369.50px;top:396.47px;width:142.70px;background:#bfe1f6;color:#0a53a8;"><span>Bathroom</span><i></i></div>
<div class="t" style="left:534.5px;top:396.27px;font-size:15.2px;line-height:20px;color:#3c4043;-webkit-text-stroke:0.2px #3c4043;">Clean Toilet</div>
<div class="t" style="left:749.5px;top:396.27px;width:130.5px;overflow:hidden;font-family:'Liberation Mono', monospace;font-size:14.3px;line-height:20px;color:#1f1f1f;-webkit-text-stroke:0.1px #1f1f1f;">Bathroom-Clean Toilet</div>
<div class="t" style="left:880.5px;top:396.27px;width:130.5px;text-align:right;font-size:15.2px;line-height:20px;color:#1a1a1a;-webkit-text-stroke:0.2px #1a1a1a;">1</div>
<div class="t" style="left:1032px;top:396.27px;font-size:15.2px;line-height:20px;color:#3c4043;">2</div>
<div class="t" style="left:1151px;top:396.27px;font-size:15.2px;line-height:20px;color:#3c4043;-webkit-text-stroke:0.15px #3c4043;">No</div>
<div style="position:absolute;left:1260.00px;top:423.47px;width:675.00px;height:1.00px;background:#e1e1e1;"></div>
<div style="position:absolute;left:0.00px;top:424.47px;width:53.00px;height:34.37px;background:#fff;"></div>
<div style="position:absolute;left:0.00px;top:458.84px;width:53.00px;height:1.00px;background:#c7c7c7;"></div>
<div class="t" style="left:0;top:433.64px;width:53px;text-align:center;font-size:12px;line-height:16px;color:#444;">14</div>
<div style="position:absolute;left:55.00px;top:423.97px;width:1204.50px;height:35.87px;background:#fff;"></div>
<div class="chip" style="left:65.00px;top:431.84px;width:138.70px;background:#d4edbc;color:#11734b;"><span>Weekly</span><i></i></div>
<div class="chip" style="left:226.50px;top:431.84px;width:120.20px;background:#e6cff2;color:#5a3286;"><span>Olan</span><i></i></div>
<div class="chip" style="left:369.50px;top:431.84px;width:142.70px;background:#bfe1f6;color:#0a53a8;"><span>Bathroom</span><i></i></div>
<div class="t" style="left:534.5px;top:431.64px;font-size:15.2px;line-height:20px;color:#3c4043;-webkit-text-stroke:0.2px #3c4043;">Clean Mirrors</div>
<div class="t" style="left:749.5px;top:431.64px;width:130.5px;overflow:hidden;font-family:'Liberation Mono', monospace;font-size:14.3px;line-height:20px;color:#1f1f1f;-webkit-text-stroke:0.1px #1f1f1f;">Bathroom-Clean Mirrors</div>
<div class="t" style="left:880.5px;top:431.64px;width:130.5px;text-align:right;font-size:15.2px;line-height:20px;color:#1a1a1a;-webkit-text-stroke:0.2px #1a1a1a;">1</div>
<div class="t" style="left:1032px;top:431.64px;font-size:15.2px;line-height:20px;color:#3c4043;">2</div>
<div class="t" style="left:1151px;top:431.64px;font-size:15.2px;line-height:20px;color:#3c4043;-webkit-text-stroke:0.15px #3c4043;">No</div>
<div style="position:absolute;left:1260.00px;top:458.84px;width:675.00px;height:1.00px;background:#e1e1e1;"></div>
<div style="position:absolute;left:0.00px;top:459.84px;width:53.00px;height:34.37px;background:#fff;"></div>
<div style="position:absolute;left:0.00px;top:494.21px;width:53.00px;height:1.00px;background:#c7c7c7;"></div>
<div class="t" style="left:0;top:469.01px;width:53px;text-align:center;font-size:12px;line-height:16px;color:#444;">15</div>
<div style="position:absolute;left:55.00px;top:459.34px;width:1204.50px;height:35.87px;background:#f6f8f9;"></div>
<div class="chip" style="left:65.00px;top:467.21px;width:138.70px;background:#d4edbc;color:#11734b;"><span>Weekly</span><i></i></div>
<div class="chip" style="left:226.50px;top:467.21px;width:120.20px;background:#e6cff2;color:#5a3286;"><span>Olan</span><i></i></div>
<div class="chip" style="left:369.50px;top:467.21px;width:142.70px;background:#bfe1f6;color:#0a53a8;"><span>Bathroom</span><i></i></div>
<div class="t" style="left:534.5px;top:467.01px;font-size:15.2px;line-height:20px;color:#3c4043;-webkit-text-stroke:0.2px #3c4043;">Clean Surfaces</div>
<div class="t" style="left:749.5px;top:467.01px;width:130.5px;overflow:hidden;font-family:'Liberation Mono', monospace;font-size:14.3px;line-height:20px;color:#1f1f1f;-webkit-text-stroke:0.1px #1f1f1f;">Bathroom-Clean Surfaces</div>
<div class="t" style="left:880.5px;top:467.01px;width:130.5px;text-align:right;font-size:15.2px;line-height:20px;color:#1a1a1a;-webkit-text-stroke:0.2px #1a1a1a;">1</div>
<div class="t" style="left:1032px;top:467.01px;font-size:15.2px;line-height:20px;color:#3c4043;">2</div>
<div class="t" style="left:1151px;top:467.01px;font-size:15.2px;line-height:20px;color:#3c4043;-webkit-text-stroke:0.15px #3c4043;">No</div>
<div style="position:absolute;left:1260.00px;top:494.21px;width:675.00px;height:1.00px;background:#e1e1e1;"></div>
<div style="position:absolute;left:0.00px;top:495.21px;width:53.00px;height:34.37px;background:#fff;"></div>
<div style="position:absolute;left:0.00px;top:529.58px;width:53.00px;height:1.00px;background:#c7c7c7;"></div>
<div class="t" style="left:0;top:504.38px;width:53px;text-align:center;font-size:12px;line-height:16px;color:#444;">16</div>
<div style="position:absolute;left:55.00px;top:494.71px;width:1204.50px;height:35.87px;background:#fff;"></div>
<div class="chip" style="left:65.00px;top:502.58px;width:138.70px;background:#bfe1f6;color:#0a53a8;"><span>Daily</span><i></i></div>
<div class="chip" style="left:226.50px;top:502.58px;width:120.20px;background:#e6cff2;color:#5a3286;"><span>Olan</span><i></i></div>
<div class="chip" style="left:369.50px;top:502.58px;width:142.70px;background:#c6dbe1;color:#215a6c;"><span>Bedroom</span><i></i></div>
<div class="t" style="left:534.5px;top:502.38px;font-size:15.2px;line-height:20px;color:#3c4043;-webkit-text-stroke:0.2px #3c4043;">Vacuum</div>
<div class="t" style="left:749.5px;top:502.38px;width:130.5px;overflow:hidden;font-family:'Liberation Mono', monospace;font-size:14.3px;line-height:20px;color:#1f1f1f;-webkit-text-stroke:0.1px #1f1f1f;">Bedroom-Vacuum</div>
<div class="t" style="left:880.5px;top:502.38px;width:130.5px;text-align:right;font-size:15.2px;line-height:20px;color:#1a1a1a;-webkit-text-stroke:0.2px #1a1a1a;">1</div>
<div class="t" style="left:1032px;top:502.38px;font-size:15.2px;line-height:20px;color:#3c4043;">3</div>
<div class="t" style="left:1151px;top:502.38px;font-size:15.2px;line-height:20px;color:#3c4043;-webkit-text-stroke:0.15px #3c4043;">No</div>
<div style="position:absolute;left:1260.00px;top:529.58px;width:675.00px;height:1.00px;background:#e1e1e1;"></div>
<div style="position:absolute;left:0.00px;top:530.58px;width:53.00px;height:34.37px;background:#fff;"></div>
<div style="position:absolute;left:0.00px;top:564.95px;width:53.00px;height:1.00px;background:#c7c7c7;"></div>
<div class="t" style="left:0;top:539.75px;width:53px;text-align:center;font-size:12px;line-height:16px;color:#444;">17</div>
<div style="position:absolute;left:55.00px;top:530.08px;width:1204.50px;height:35.87px;background:#f6f8f9;"></div>
<div class="chip" style="left:65.00px;top:537.95px;width:138.70px;background:#e6cff2;color:#5a3286;"><span>Semi-Annual</span><i></i></div>
<div class="chip" style="left:226.50px;top:537.95px;width:120.20px;background:#e6cff2;color:#5a3286;"><span>Olan</span><i></i></div>
<div class="chip" style="left:369.50px;top:537.95px;width:142.70px;background:#c6dbe1;color:#215a6c;"><span>Bedroom</span><i></i></div>
<div class="t" style="left:534.5px;top:537.75px;font-size:15.2px;line-height:20px;color:#3c4043;-webkit-text-stroke:0.2px #3c4043;">Dust under the bed</div>
<div class="t" style="left:749.5px;top:537.75px;width:130.5px;overflow:hidden;font-family:'Liberation Mono', monospace;font-size:14.3px;line-height:20px;color:#1f1f1f;-webkit-text-stroke:0.1px #1f1f1f;">Bedroom-Dust under the bed</div>
<div class="t" style="left:880.5px;top:537.75px;width:130.5px;text-align:right;font-size:15.2px;line-height:20px;color:#1a1a1a;-webkit-text-stroke:0.2px #1a1a1a;">124</div>
<div class="t" style="left:1032px;top:537.75px;font-size:15.2px;line-height:20px;color:#3c4043;">1</div>
<div class="t" style="left:1151px;top:537.75px;font-size:15.2px;line-height:20px;color:#3c4043;-webkit-text-stroke:0.15px #3c4043;">No</div>
<div style="position:absolute;left:1260.00px;top:564.95px;width:675.00px;height:1.00px;background:#e1e1e1;"></div>
<div style="position:absolute;left:0.00px;top:565.95px;width:53.00px;height:34.37px;background:#fff;"></div>
<div style="position:absolute;left:0.00px;top:600.32px;width:53.00px;height:1.00px;background:#c7c7c7;"></div>
<div class="t" style="left:0;top:575.12px;width:53px;text-align:center;font-size:12px;line-height:16px;color:#444;">18</div>
<div style="position:absolute;left:55.00px;top:565.45px;width:1204.50px;height:35.87px;background:#fff;"></div>
<div class="chip" style="left:65.00px;top:573.32px;width:138.70px;background:#d4edbc;color:#11734b;"><span>Weekly</span><i></i></div>
<div class="chip" style="left:226.50px;top:573.32px;width:120.20px;background:#e6cff2;color:#5a3286;"><span>Olan</span><i></i></div>
<div class="chip" style="left:369.50px;top:573.32px;width:142.70px;background:#c6dbe1;color:#215a6c;"><span>Bedroom</span><i></i></div>
<div class="t" style="left:534.5px;top:573.12px;font-size:15.2px;line-height:20px;color:#3c4043;-webkit-text-stroke:0.2px #3c4043;">Change Bed Sheets</div>
<div class="t" style="left:749.5px;top:573.12px;width:130.5px;overflow:hidden;font-family:'Liberation Mono', monospace;font-size:14.3px;line-height:20px;color:#1f1f1f;-webkit-text-stroke:0.1px #1f1f1f;">Bedroom-Change Bed Sheets</div>
<div class="t" style="left:880.5px;top:573.12px;width:130.5px;text-align:right;font-size:15.2px;line-height:20px;color:#1a1a1a;-webkit-text-stroke:0.2px #1a1a1a;">1</div>
<div class="t" style="left:1032px;top:573.12px;font-size:15.2px;line-height:20px;color:#3c4043;">2</div>
<div class="t" style="left:1151px;top:573.12px;font-size:15.2px;line-height:20px;color:#3c4043;-webkit-text-stroke:0.15px #3c4043;">No</div>
<div style="position:absolute;left:1260.00px;top:600.32px;width:675.00px;height:1.00px;background:#e1e1e1;"></div>
<div style="position:absolute;left:0.00px;top:601.32px;width:53.00px;height:34.37px;background:#fff;"></div>
<div style="position:absolute;left:0.00px;top:635.69px;width:53.00px;height:1.00px;background:#c7c7c7;"></div>
<div class="t" style="left:0;top:610.49px;width:53px;text-align:center;font-size:12px;line-height:16px;color:#444;">19</div>
<div style="position:absolute;left:55.00px;top:600.82px;width:1204.50px;height:35.87px;background:#f6f8f9;"></div>
<div class="chip" style="left:65.00px;top:608.69px;width:138.70px;background:#ffe5a0;color:#473821;"><span>Monthly</span><i></i></div>
<div class="chip" style="left:226.50px;top:608.69px;width:120.20px;background:#e6cff2;color:#5a3286;"><span>Olan</span><i></i></div>
<div class="chip" style="left:369.50px;top:608.69px;width:142.70px;background:#3d3d3d;color:#ffffff;"><span>Closet</span><i></i></div>
<div class="t" style="left:534.5px;top:608.49px;font-size:15.2px;line-height:20px;color:#3c4043;-webkit-text-stroke:0.2px #3c4043;">Dust under drawers</div>
<div class="t" style="left:749.5px;top:608.49px;width:130.5px;overflow:hidden;font-family:'Liberation Mono', monospace;font-size:14.3px;line-height:20px;color:#1f1f1f;-webkit-text-stroke:0.1px #1f1f1f;">Closet-Dust under drawers</div>
<div class="t" style="left:880.5px;top:608.49px;width:130.5px;text-align:right;font-size:15.2px;line-height:20px;color:#1a1a1a;-webkit-text-stroke:0.2px #1a1a1a;">9</div>
<div class="t" style="left:1032px;top:608.49px;font-size:15.2px;line-height:20px;color:#3c4043;">1</div>
<div class="t" style="left:1151px;top:608.49px;font-size:15.2px;line-height:20px;color:#3c4043;-webkit-text-stroke:0.15px #3c4043;">No</div>
<div style="position:absolute;left:1260.00px;top:635.69px;width:675.00px;height:1.00px;background:#e1e1e1;"></div>
<div style="position:absolute;left:0.00px;top:636.69px;width:53.00px;height:34.37px;background:#fff;"></div>
<div style="position:absolute;left:0.00px;top:671.06px;width:53.00px;height:1.00px;background:#c7c7c7;"></div>
<div class="t" style="left:0;top:645.86px;width:53px;text-align:center;font-size:12px;line-height:16px;color:#444;">20</div>
<div style="position:absolute;left:55.00px;top:636.19px;width:1204.50px;height:35.87px;background:#fff;"></div>
<div class="chip" style="left:65.00px;top:644.06px;width:138.70px;background:#d4edbc;color:#11734b;"><span>Weekly</span><i></i></div>
<div class="chip" style="left:226.50px;top:644.06px;width:120.20px;background:#e6cff2;color:#5a3286;"><span>Olan</span><i></i></div>
<div class="chip" style="left:369.50px;top:644.06px;width:142.70px;background:#3d3d3d;color:#ffffff;"><span>Closet</span><i></i></div>
<div class="t" style="left:534.5px;top:643.86px;font-size:15.2px;line-height:20px;color:#3c4043;-webkit-text-stroke:0.2px #3c4043;">Organize Squirrel Pile</div>
<div class="t" style="left:749.5px;top:643.86px;width:130.5px;overflow:hidden;font-family:'Liberation Mono', monospace;font-size:14.3px;line-height:20px;color:#1f1f1f;-webkit-text-stroke:0.1px #1f1f1f;">Closet-Organize Squirrel Pile</div>
<div class="t" style="left:880.5px;top:643.86px;width:130.5px;text-align:right;font-size:15.2px;line-height:20px;color:#1a1a1a;-webkit-text-stroke:0.2px #1a1a1a;">1</div>
<div class="t" style="left:1032px;top:643.86px;font-size:15.2px;line-height:20px;color:#3c4043;">2</div>
<div class="t" style="left:1151px;top:643.86px;font-size:15.2px;line-height:20px;color:#3c4043;-webkit-text-stroke:0.15px #3c4043;">No</div>
<div style="position:absolute;left:1260.00px;top:671.06px;width:675.00px;height:1.00px;background:#e1e1e1;"></div>
<div style="position:absolute;left:0.00px;top:672.06px;width:53.00px;height:34.37px;background:#fff;"></div>
<div style="position:absolute;left:0.00px;top:706.43px;width:53.00px;height:1.00px;background:#c7c7c7;"></div>
<div class="t" style="left:0;top:681.23px;width:53px;text-align:center;font-size:12px;line-height:16px;color:#444;">21</div>
<div style="position:absolute;left:55.00px;top:671.56px;width:1204.50px;height:35.87px;background:#f6f8f9;"></div>
<div class="chip" style="left:65.00px;top:679.43px;width:138.70px;background:#bfe1f6;color:#0a53a8;"><span>Daily</span><i></i></div>
<div class="chip" style="left:226.50px;top:679.43px;width:120.20px;background:#e6cff2;color:#5a3286;"><span>Olan</span><i></i></div>
<div class="chip" style="left:369.50px;top:679.43px;width:142.70px;background:#753800;color:#ffc8aa;"><span>Dining Room</span><i></i></div>
<div class="t" style="left:534.5px;top:679.23px;font-size:15.2px;line-height:20px;color:#3c4043;-webkit-text-stroke:0.2px #3c4043;">Vacuum</div>
<div class="t" style="left:749.5px;top:679.23px;width:130.5px;overflow:hidden;font-family:'Liberation Mono', monospace;font-size:14.3px;line-height:20px;color:#1f1f1f;-webkit-text-stroke:0.1px #1f1f1f;">Dining Room-Vacuum</div>
<div class="t" style="left:880.5px;top:679.23px;width:130.5px;text-align:right;font-size:15.2px;line-height:20px;color:#1a1a1a;-webkit-text-stroke:0.2px #1a1a1a;">1</div>
<div class="t" style="left:1032px;top:679.23px;font-size:15.2px;line-height:20px;color:#3c4043;">4</div>
<div class="t" style="left:1151px;top:679.23px;font-size:15.2px;line-height:20px;color:#3c4043;-webkit-text-stroke:0.15px #3c4043;">No</div>
<div style="position:absolute;left:1260.00px;top:706.43px;width:675.00px;height:1.00px;background:#e1e1e1;"></div>
<div style="position:absolute;left:0.00px;top:707.43px;width:53.00px;height:34.37px;background:#fff;"></div>
<div style="position:absolute;left:0.00px;top:741.80px;width:53.00px;height:1.00px;background:#c7c7c7;"></div>
<div class="t" style="left:0;top:716.60px;width:53px;text-align:center;font-size:12px;line-height:16px;color:#444;">22</div>
<div style="position:absolute;left:55.00px;top:706.93px;width:1204.50px;height:35.87px;background:#fff;"></div>
<div class="chip" style="left:65.00px;top:714.80px;width:138.70px;background:#bfe1f6;color:#0a53a8;"><span>Daily</span><i></i></div>
<div class="chip" style="left:226.50px;top:714.80px;width:120.20px;background:#e6cff2;color:#5a3286;"><span>Olan</span><i></i></div>
<div class="chip" style="left:369.50px;top:714.80px;width:142.70px;background:#753800;color:#ffc8aa;"><span>Dining Room</span><i></i></div>
<div class="t" style="left:534.5px;top:714.60px;font-size:15.2px;line-height:20px;color:#3c4043;-webkit-text-stroke:0.2px #3c4043;">Clean Dining Table</div>
<div class="t" style="left:749.5px;top:714.60px;width:130.5px;overflow:hidden;font-family:'Liberation Mono', monospace;font-size:14.3px;line-height:20px;color:#1f1f1f;-webkit-text-stroke:0.1px #1f1f1f;">Dining Room-Clean Dining Table</div>
<div class="t" style="left:880.5px;top:714.60px;width:130.5px;text-align:right;font-size:15.2px;line-height:20px;color:#1a1a1a;-webkit-text-stroke:0.2px #1a1a1a;">3</div>
<div class="t" style="left:1032px;top:714.60px;font-size:15.2px;line-height:20px;color:#3c4043;">3</div>
<div class="t" style="left:1151px;top:714.60px;font-size:15.2px;line-height:20px;color:#3c4043;-webkit-text-stroke:0.15px #3c4043;">No</div>
<div style="position:absolute;left:1260.00px;top:741.80px;width:675.00px;height:1.00px;background:#e1e1e1;"></div>
<div style="position:absolute;left:1378.50px;top:0.00px;width:1.00px;height:725.00px;background:#e1e1e1;"></div>
<div style="position:absolute;left:1497.20px;top:0.00px;width:1.00px;height:725.00px;background:#e1e1e1;"></div>
<div style="position:absolute;left:1616.30px;top:0.00px;width:1.00px;height:725.00px;background:#e1e1e1;"></div>
<div style="position:absolute;left:1735.30px;top:0.00px;width:1.00px;height:725.00px;background:#e1e1e1;"></div>
<div style="position:absolute;left:1854.30px;top:0.00px;width:1.00px;height:725.00px;background:#e1e1e1;"></div>
<div style="position:absolute;left:1934.00px;top:0.00px;width:1.00px;height:725.00px;background:#c7c7c7;"></div>
<div style="position:absolute;left:53.00px;top:0.00px;width:1.00px;height:725.00px;background:#c7c7c7;"></div>
<div style="position:absolute;left:54.00px;top:0.00px;width:1.20px;height:725.00px;background:#a8413a;"></div>
<div style="position:absolute;left:1259.50px;top:0.00px;width:1.20px;height:725.00px;background:#c0605a;"></div>
<div class="t" style="left:1385.5px;top:13.90px;font-size:15.5px;line-height:18px;color:#000;">Daily</div>
<div class="t" style="left:1497.7px;top:13.90px;width:113.5px;text-align:right;font-size:15.5px;line-height:18px;color:#000;">1</div>
<div style="position:absolute;left:1380.50px;top:35.40px;width:117.00px;height:34.37px;background:#fef8e3;"></div>
<div style="position:absolute;left:1498.20px;top:35.40px;width:116.80px;height:34.37px;background:#fef8e3;"></div>
<div class="t" style="left:1385.5px;top:49.27px;font-size:15.5px;line-height:18px;color:#000;">Semi-Weekly</div>
<div class="t" style="left:1497.7px;top:49.27px;width:113.5px;text-align:right;font-size:15.5px;line-height:18px;color:#000;">3</div>
<div class="t" style="left:1385.5px;top:84.64px;font-size:15.5px;line-height:18px;color:#000;">Weekly</div>
<div class="t" style="left:1497.7px;top:84.64px;width:113.5px;text-align:right;font-size:15.5px;line-height:18px;color:#000;">7</div>
<div style="position:absolute;left:1380.50px;top:106.14px;width:117.00px;height:34.37px;background:#fef8e3;"></div>
<div style="position:absolute;left:1498.20px;top:106.14px;width:116.80px;height:34.37px;background:#fef8e3;"></div>
<div class="t" style="left:1385.5px;top:120.01px;font-size:15.5px;line-height:18px;color:#000;">Semi-Monthly</div>
<div class="t" style="left:1497.7px;top:120.01px;width:113.5px;text-align:right;font-size:15.5px;line-height:18px;color:#000;">14</div>
<div class="t" style="left:1385.5px;top:155.38px;font-size:15.5px;line-height:18px;color:#000;">Monthly</div>
<div class="t" style="left:1497.7px;top:155.38px;width:113.5px;text-align:right;font-size:15.5px;line-height:18px;color:#000;">30</div>
<div style="position:absolute;left:1380.50px;top:176.88px;width:117.00px;height:34.37px;background:#fef8e3;"></div>
<div style="position:absolute;left:1498.20px;top:176.88px;width:116.80px;height:34.37px;background:#fef8e3;"></div>
<div class="t" style="left:1385.5px;top:190.75px;font-size:15.5px;line-height:18px;color:#000;">Every 2 Months</div>
<div class="t" style="left:1497.7px;top:190.75px;width:113.5px;text-align:right;font-size:15.5px;line-height:18px;color:#000;">60</div>
<div class="t" style="left:1385.5px;top:226.12px;font-size:15.5px;line-height:18px;color:#000;">Quarterly</div>
<div class="t" style="left:1497.7px;top:226.12px;width:113.5px;text-align:right;font-size:15.5px;line-height:18px;color:#000;">92</div>
<div style="position:absolute;left:1380.50px;top:247.62px;width:117.00px;height:34.37px;background:#fef8e3;"></div>
<div style="position:absolute;left:1498.20px;top:247.62px;width:116.80px;height:34.37px;background:#fef8e3;"></div>
<div class="t" style="left:1385.5px;top:261.49px;font-size:15.5px;line-height:18px;color:#000;">Semi-Annual</div>
<div class="t" style="left:1497.7px;top:261.49px;width:113.5px;text-align:right;font-size:15.5px;line-height:18px;color:#000;">180</div>
<div class="t" style="left:1385.5px;top:294.86px;font-size:15.5px;line-height:18px;color:#000;">Annual</div>
<div class="t" style="left:1497.7px;top:294.86px;width:113.5px;text-align:right;font-size:15.5px;line-height:18px;color:#000;">365</div>
<div style="position:absolute;left:1377.00px;top:0.00px;width:3.50px;height:319.36px;background:#000;"></div>
<div style="position:absolute;left:1615.00px;top:0.00px;width:3.50px;height:319.36px;background:#000;"></div>
<div style="position:absolute;left:1377.00px;top:315.86px;width:241.50px;height:3.50px;background:#000;"></div>
<div class="t" style="left:1742.5px;top:13.90px;font-size:15.5px;line-height:18px;color:#000;">Bathroom</div>
<div style="position:absolute;left:1737.50px;top:35.40px;width:115.50px;height:34.37px;background:#e8f0fe;"></div>
<div class="t" style="left:1742.5px;top:49.27px;font-size:15.5px;line-height:18px;color:#000;">Living Room</div>
<div class="t" style="left:1742.5px;top:84.64px;font-size:15.5px;line-height:18px;color:#000;">Bedroom</div>
<div style="position:absolute;left:1737.50px;top:106.14px;width:115.50px;height:34.37px;background:#e8f0fe;"></div>
<div class="t" style="left:1742.5px;top:120.01px;font-size:15.5px;line-height:18px;color:#000;">Office</div>
<div class="t" style="left:1742.5px;top:155.38px;font-size:15.5px;line-height:18px;color:#000;">Backyard</div>
<div style="position:absolute;left:1737.50px;top:176.88px;width:115.50px;height:34.37px;background:#e8f0fe;"></div>
<div class="t" style="left:1742.5px;top:190.75px;font-size:15.5px;line-height:18px;color:#000;">Garage</div>
<div class="t" style="left:1742.5px;top:226.12px;font-size:15.5px;line-height:18px;color:#000;">Kitchen</div>
<div style="position:absolute;left:1737.50px;top:247.62px;width:115.50px;height:34.37px;background:#e8f0fe;"></div>
<div class="t" style="left:1742.5px;top:261.49px;font-size:15.5px;line-height:18px;color:#000;">Dining Room</div>
<div class="t" style="left:1742.5px;top:296.86px;font-size:15.5px;line-height:18px;color:#000;">Personal</div>
<div style="position:absolute;left:1737.50px;top:318.36px;width:115.50px;height:34.37px;background:#e8f0fe;"></div>
<div class="t" style="left:1742.5px;top:332.23px;font-size:15.5px;line-height:18px;color:#000;">Closet</div>
<div class="t" style="left:1742.5px;top:367.60px;font-size:15.5px;line-height:18px;color:#000;">Everywhere</div>
<div style="position:absolute;left:1737.50px;top:389.10px;width:115.50px;height:34.37px;background:#e8f0fe;"></div>
<div class="t" style="left:1742.5px;top:402.97px;font-size:15.5px;line-height:18px;color:#000;">Laundry</div>
<div style="position:absolute;left:1737.50px;top:459.84px;width:115.50px;height:34.37px;background:#e8f0fe;"></div>
<div style="position:absolute;left:1737.50px;top:530.58px;width:115.50px;height:34.37px;background:#e8f0fe;"></div>
<div style="position:absolute;left:1737.50px;top:601.32px;width:115.50px;height:34.37px;background:#e8f0fe;"></div>
<div style="position:absolute;left:1734.00px;top:0.00px;width:3.50px;height:673.06px;background:#000;"></div>
<div style="position:absolute;left:1853.00px;top:0.00px;width:3.50px;height:673.06px;background:#000;"></div>
<div style="position:absolute;left:1734.00px;top:669.56px;width:122.50px;height:3.50px;background:#000;"></div>
</div>
<div style="position:absolute;left:54.00px;top:136.00px;width:161.50px;height:63.00px;border:2px solid #1a73e8;box-sizing:border-box;"></div>
<div style="position:absolute;left:209.8px;top:194.1px;width:9px;height:9px;border-radius:50%;background:#0b57d0;border:1.3px solid #fff;"></div>
<div style="position:absolute;left:25px;top:169px;width:28px;height:29px;background:#f8fafd;border-radius:4px 0 0 4px;box-shadow:0 1px 2px rgba(0,0,0,0.15);"></div>
<div style="position:absolute;left:33.30px;top:183.00px;width:11.60px;height:1.50px;background:#444;"></div>
<div style="position:absolute;left:38.30px;top:178.00px;width:1.50px;height:11.60px;background:#444;"></div>
<div style="position:absolute;left:0.00px;top:157.80px;width:53.00px;white-space:nowrap;font-size:12px;line-height:16px;color:#444;text-align:center;">1</div>
<div style="position:absolute;left:1937px;top:204.4px;width:12px;height:120px;background:#dadce0;border-radius:6px;"></div>
<div style="position:absolute;left:1935.00px;top:891.00px;width:11.00px;height:1.00px;background:#e1e1e1;"></div>
<div style="position:absolute;left:1938.8px;top:898px;width:0;height:0;border-left:4px solid transparent;border-right:4px solid transparent;border-bottom:3.5px solid #777;"></div>
<div style="position:absolute;left:1938.8px;top:918px;width:0;height:0;border-left:4px solid transparent;border-right:4px solid transparent;border-top:3.5px solid #777;"></div>
<div style="position:absolute;left:0.00px;top:928.50px;width:1946.00px;height:15.50px;background:#fff;"></div>
<div style="position:absolute;left:0.00px;top:928.50px;width:53.00px;height:15.50px;background:#f6f6f6;"></div>
<div style="position:absolute;left:1899.00px;top:928.50px;width:35.50px;height:15.50px;background:#f8f8f8;"></div>
<div style="position:absolute;left:0.00px;top:928.00px;width:1935.00px;height:1.00px;background:#e1e1e1;"></div>
<div style="position:absolute;left:53.00px;top:928.50px;width:1.00px;height:15.50px;background:#c7c7c7;"></div>
<div style="position:absolute;left:57px;top:931.3px;width:1603px;height:9.8px;background:#dadce0;border-radius:5px;"></div>
<div style="position:absolute;left:1898.50px;top:928.50px;width:1.00px;height:15.50px;background:#e1e1e1;"></div>
<div style="position:absolute;left:1917.00px;top:928.50px;width:1.00px;height:15.50px;background:#e1e1e1;"></div>
<div style="position:absolute;left:1934.00px;top:928.50px;width:1.00px;height:15.50px;background:#c7c7c7;"></div>
<div style="position:absolute;left:1904px;top:932px;width:0;height:0;border-top:4px solid transparent;border-bottom:4px solid transparent;border-right:4px solid #777;"></div>
<div style="position:absolute;left:1925px;top:932px;width:0;height:0;border-top:4px solid transparent;border-bottom:4px solid transparent;border-left:4px solid #777;"></div>
<div style="position:absolute;left:0.00px;top:944.00px;width:1946.00px;height:41.00px;background:#f6f9fc;"></div>
<div style="position:absolute;left:0.00px;top:943.80px;width:1946.00px;height:1.00px;background:#dadce0;"></div>
<div style="position:absolute;left:65.90px;top:966.10px;width:13.00px;height:1.80px;background:#444;"></div>
<div style="position:absolute;left:71.50px;top:960.50px;width:1.80px;height:13.00px;background:#444;"></div>
<div style="position:absolute;left:110.80px;top:961.30px;width:17.20px;height:2.00px;background:#444;"></div>
<div style="position:absolute;left:110.80px;top:965.90px;width:17.20px;height:2.00px;background:#444;"></div>
<div style="position:absolute;left:110.80px;top:970.40px;width:17.20px;height:2.00px;background:#444;"></div>
<div style="position:absolute;left:172.50px;top:957.00px;white-space:nowrap;font-size:16.5px;line-height:20px;color:#444;letter-spacing:0.95px;-webkit-text-stroke:0.2px #444;">To Do List</div>
<div style="position:absolute;left:266.5px;top:964.8px;width:0;height:0;border-left:5px solid transparent;border-right:5px solid transparent;border-top:5px solid #444;"></div>
<div style="position:absolute;left:306.00px;top:957.00px;white-space:nowrap;font-size:16.5px;line-height:20px;color:#444;letter-spacing:0.95px;-webkit-text-stroke:0.2px #444;">Completed</div>
<div style="position:absolute;left:407.5px;top:964.8px;width:0;height:0;border-left:5px solid transparent;border-right:5px solid transparent;border-top:5px solid #444;"></div>
<div style="position:absolute;left:432.00px;top:944.80px;width:140.50px;height:40.20px;background:#e1e9f7;"></div>
<div style="position:absolute;left:445.50px;top:957.00px;white-space:nowrap;font-size:16.5px;line-height:20px;color:#0b57d0;font-weight:bold;letter-spacing:0.6px;">Worksheet</div>
<div style="position:absolute;left:548.5px;top:964.8px;width:0;height:0;border-left:5px solid transparent;border-right:5px solid transparent;border-top:5px solid #0b57d0;"></div>
<svg style="position:absolute;left:0;top:971px;" width="14" height="14" viewBox="0 0 14 14"><path d="M0 0 A14 14 0 0 0 14 14 L0 14 Z" fill="#2a2416"/></svg>
</div></body></html>
